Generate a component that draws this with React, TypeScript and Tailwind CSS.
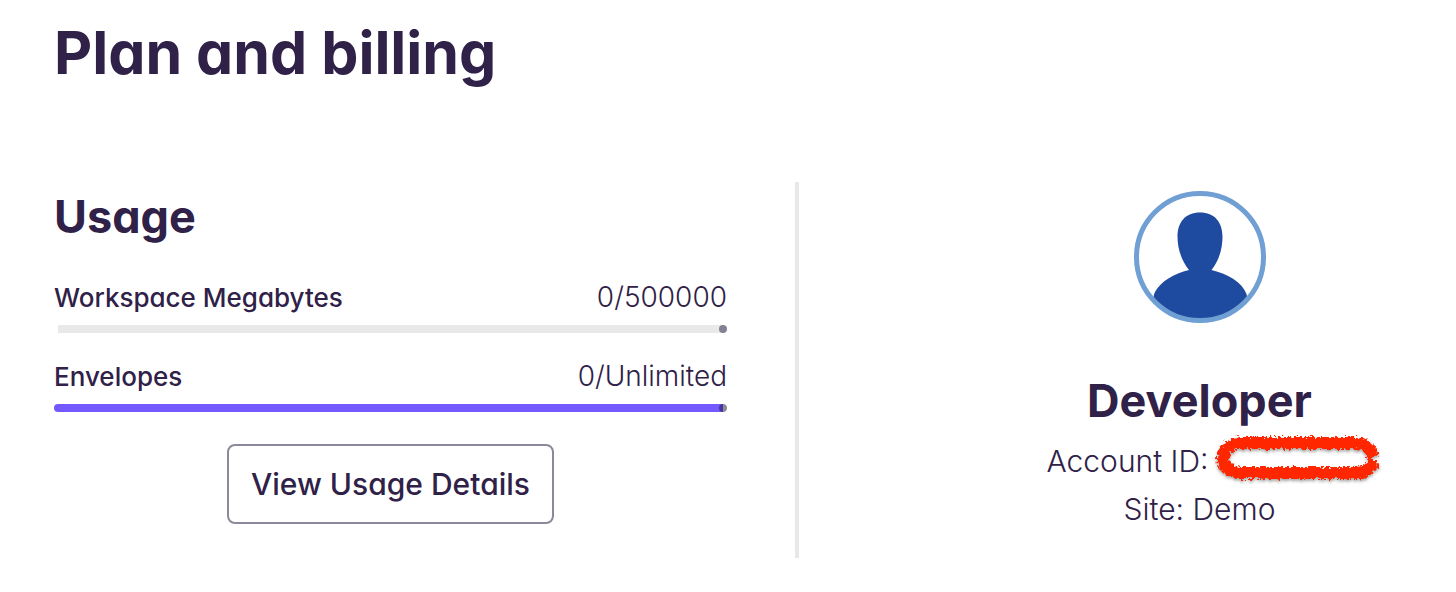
const USAGE = [
  { id: 'megabytes', label: 'Workspace Megabytes', value: '0/500000', unlimited: false },
  { id: 'envelopes', label: 'Envelopes', value: '0/Unlimited', unlimited: true },
]

function UsageBar({ unlimited, labelledBy }: { unlimited: boolean; labelledBy: string }) {
  return (
    <div role="progressbar" aria-labelledby={labelledBy} aria-valuenow={0} className="relative flex h-2">
      {unlimited
        ? <div className="mr-1 flex-1 rounded-l-full bg-[#7459ff]" />
        : <div className="mx-1 flex-1 bg-[#e9e9ea]" />}
      {/* end cap, half of it sits over the bar */}
      <div className="absolute right-0 top-0 flex size-2 overflow-hidden rounded-full">
        <span className={unlimited ? 'flex-1 bg-[#4a3799]' : 'flex-1 bg-[#858094]'} />
        <span className={unlimited ? 'flex-1 bg-[#8d889b]' : 'flex-1 bg-[#858094]'} />
      </div>
    </div>
  )
}

function Avatar() {
  return (
    <svg viewBox="0 0 132 132" className="size-[132px]" role="img" aria-label="Account avatar">
      <path
        fill="#1e4b9f"
        d="M66 21.500C80.500 21.500 88.500 31 88.500 46C88.500 58 84.500 70.500 77.500 79C94 83 108 91 112.500 103C113 104.500 113 106 113 107.500C100 121 84 128 66 128C48 128 32 121 19.500 107.500C19.500 105 20 103 21 101C26.500 90.500 40 82.500 55 79C48 70.500 43.500 58 43.500 46C43.500 31 51.500 21.500 66 21.500Z"
      />
      <circle cx="66" cy="66" r="63.500" fill="none" stroke="#6f9fd3" strokeWidth="5" />
    </svg>
  )
}

// Rough marker outline that hides the account number
function Redaction() {
  return (
    <svg viewBox="0 0 180 60" className="absolute -left-2 -top-2 h-[60px] w-[180px] max-w-none" aria-hidden="true">
      <defs>
        <filter id="marker" x="0" y="0" width="180" height="60" filterUnits="userSpaceOnUse" colorInterpolationFilters="sRGB">
          <feTurbulence type="fractalNoise" baseFrequency="0.35" numOctaves="2" seed="9" result="noise" />
          <feDisplacementMap in="SourceGraphic" in2="noise" scale="8" xChannelSelector="R" yChannelSelector="G" result="rough" />
          <feDropShadow in="rough" dx="0" dy="2" stdDeviation="1.500" floodColor="#000000" floodOpacity="0.350" />
        </filter>
      </defs>
      <path
        d="M164 26C161 17 155 12 147 12H31C20 13 14 19 14 27C14 35 20 41 31 42H147C155 42 161 38 165 30"
        fill="none" stroke="#ff2600" strokeWidth="12" filter="url(#marker)"
      />
    </svg>
  )
}

export default function App() {
  return (
    <main className="bg-white px-[54px] pb-[34px] pt-[13px] font-['Inter',sans-serif] text-[#2f2147] [font-feature-settings:'cv11']">
      <h1 className="text-[59px] font-bold leading-20">Plan and billing</h1>

      <div className="mt-[89px] -mr-[54px] grid grid-cols-[745fr_657fr]">
        <section className="border-r-4 border-[#e8e8e9] pb-[34px] pr-[68px] pt-[7px]">
          <h2 className="text-[45px] font-bold leading-14">Usage</h2>
          <div className="mt-8 flex flex-col gap-[23px]">
            {USAGE.map(item => (
              <div key={item.id}>
                <div className="mb-2 flex h-10 items-center justify-between">
                  <span id={item.id} className="text-[26px] font-medium">{item.label}</span>
                  <span className="text-[28px] font-light">{item.value}</span>
                </div>
                <UsageBar unlimited={item.unlimited} labelledBy={item.id} />
              </div>
            ))}
          </div>
          <div className="mt-8 flex justify-center">
            <button type="button" className="h-20 rounded-lg border-2 border-[#8d889b] px-[22px] text-[30px] font-medium">
              View Usage Details
            </button>
          </div>
        </section>

        <section className="flex flex-col items-center pl-36 pt-[9px]">
          <Avatar />
          <h2 className="mt-[50px] text-[45px] font-bold leading-14">Developer</h2>
          <p className="mt-2 flex items-center text-[30px] font-light leading-12">
            Account ID:
            <span className="relative ml-2 h-11 w-[136px]"><Redaction /></span>
          </p>
          <p className="text-[30px] font-light leading-12">Site: Demo</p>
        </section>
      </div>
    </main>
  )
}
